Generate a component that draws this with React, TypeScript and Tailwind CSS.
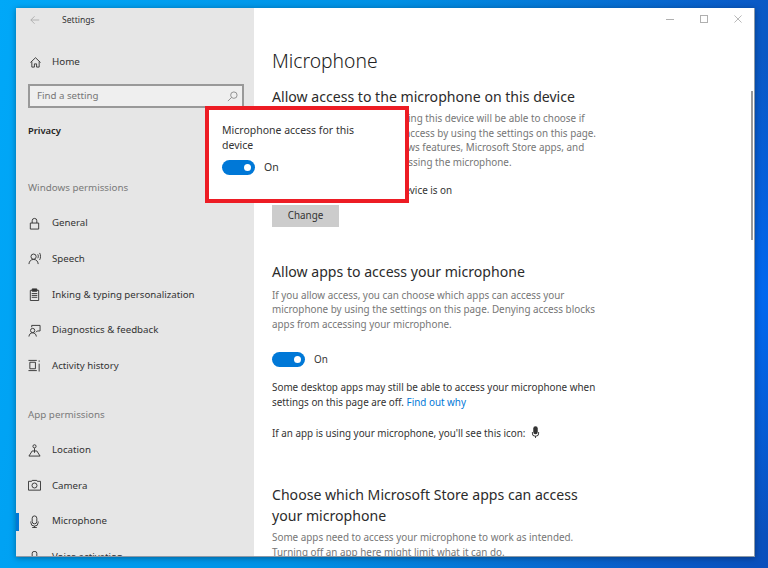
import type { ReactNode } from 'react';

function Icon({ children }: { children: ReactNode }) {
  return (
    <svg viewBox="0 0 14 14" fill="none" stroke="#333" strokeWidth="1" className="w-[13px] h-[13px] shrink-0">
      {children}
    </svg>
  );
}

const icons: Record<string, ReactNode> = {
  General: (
    <>
      <path d="M2.5 6.500h9v6.500h-9z" />
      <path d="M4.500 6.500V4a2.500 2.500 0 0 1 5 0v2.500" />
    </>
  ),
  Speech: (
    <>
      <circle cx="6" cy="5" r="2.800" />
      <path d="M1 13c.3-3 2-5 5-5s4.700 2 5 5" />
      <path d="M10.500 2.500c.8 1.200.8 3 0 4.200M12.500 1c1.300 2 1.300 5.500 0 7.500" />
    </>
  ),
  'Inking & typing personalization': (
    <>
      <path d="M4.500 2.500H2.500v11h9v-11H9.500" />
      <path d="M4.500 1h5v2.500h-5z" fill="#333" />
      <path d="M4 6h6M4 8h6M4 10h6" />
    </>
  ),
  'Diagnostics & feedback': (
    <>
      <circle cx="5" cy="7" r="2.300" />
      <path d="M1 13.500c.3-2.500 1.800-4 4-4s3.700 1.500 4 4" />
      <path d="M4 3.500V1.500h9v6h-3l-1.500 1.500" />
    </>
  ),
  'Activity history': (
    <>
      <path d="M2 3.500h6v7H2z" />
      <path d="M.5 1.500h9M.5 12.500h9M12 1.500v1.500M12 5v8.500" />
    </>
  ),
  Location: (
    <>
      <circle cx="7" cy="2.500" r="1.700" />
      <path d="M7 4.500v5" />
      <path d="M4.500 7.500h5l3.500 5.500H1z" />
    </>
  ),
  Camera: (
    <>
      <path d="M.5 2.500h3.500l.5-1h5l.5 1h3.500v9.500H.5z" />
      <circle cx="7" cy="7" r="2.700" />
    </>
  ),
  Microphone: (
    <>
      <rect x="4.500" y="1" width="5" height="8.500" rx="2.500" />
      <path d="M3 7v1a4 4 0 0 0 8 0V7M7 12v1.500M4.500 13.500h5" />
    </>
  ),
  'Voice activation': (
    <>
      <rect x="4.500" y=".5" width="5" height="7" rx="2" />
      <path d="M2.500 8h9v4h-9z" fill="#333" />
    </>
  ),
};

function NavItem({ label, active }: { label: string; active?: boolean }) {
  return (
    <div className="relative h-[35.7px] flex items-center gap-[11px] pl-[12px] text-[9.7px] leading-[14px] text-[#333] shrink-0">
      {active && <div className="absolute left-0 top-[9px] w-[3px] h-[18px] bg-[#0078d7]" />}
      <Icon>{icons[label]}</Icon>
      <span>{label}</span>
    </div>
  );
}

function Toggle() {
  return (
    <div className="w-[33px] h-[15px] rounded-full bg-[#0078d7] flex items-center justify-end pr-[4px] shrink-0">
      <div className="w-[7px] h-[7px] rounded-full bg-white" />
    </div>
  );
}

function Sidebar() {
  return (
    <div className="w-[238px] h-full bg-[#e6e6e6] overflow-hidden flex flex-col shrink-0 leading-[14px] font-['Noto_Sans',sans-serif]">
      <div className="h-[24px] shrink-0 flex items-center pl-[14px]">
        <svg viewBox="0 0 12 12" fill="none" stroke="#a8a8a8" strokeWidth="1" className="w-[10px] h-[10px]">
          <path d="M11 6H1M5.500 1.500 1 6l4.500 4.500" />
        </svg>
        <span className="ml-[22px] text-[8.6px] text-[#333]">Settings</span>
      </div>
      <div className="h-[26px] shrink-0 mt-[17px] flex items-center gap-[11px] pl-[14px] text-[9.8px] text-[#333]">
        <svg viewBox="0 0 12 12" fill="none" stroke="#333" strokeWidth="1" className="w-[11px] h-[11px]">
          <path d="M.5 6 6 .8 11.500 6M2 5v6h2.800V7.500h2.400V11H10V5" />
        </svg>
        <span>Home</span>
      </div>
      <div className="ml-[12px] mt-[9px] w-[216px] h-[24px] shrink-0 border-2 border-[#999] bg-[#efefef] flex items-center justify-between pl-[7px] pr-[4px] text-[9.7px] text-[#767676]">
        <span>Find a setting</span>
        <svg viewBox="0 0 12 12" fill="none" stroke="#8a8a8a" strokeWidth="1" className="w-[11px] h-[11px]">
          <circle cx="7.500" cy="4.500" r="3.500" />
          <path d="M5 7 1 11" />
        </svg>
      </div>
      <div className="ml-[12px] mt-[16px] shrink-0 text-[9.4px] font-semibold text-[#222]">Privacy</div>
      <div className="ml-[12px] mt-[43px] shrink-0 text-[9.8px] text-[#7a7a7a]">Windows permissions</div>
      <div className="mt-[10.3px] shrink-0 flex flex-col">
        <NavItem label="General" />
        <NavItem label="Speech" />
        <NavItem label="Inking & typing personalization" />
        <NavItem label="Diagnostics & feedback" />
        <NavItem label="Activity history" />
      </div>
      <div className="ml-[12px] mt-[24.5px] shrink-0 text-[9.8px] text-[#7a7a7a]">App permissions</div>
      <div className="mt-[10px] shrink-0 flex flex-col">
        <NavItem label="Location" />
        <NavItem label="Camera" />
        <NavItem label="Microphone" active />
        <NavItem label="Voice activation" />
      </div>
    </div>
  );
}

function Content() {
  return (
    <div className="flex-1 h-full overflow-hidden pl-[18px] pt-[39px] text-[9.87px] leading-[14.5px] text-[#333] font-['Noto_Sans',sans-serif]">
      <h1 className="text-[19.3px] leading-[28px] font-light text-[#222]">Microphone</h1>
      <h2 className="mt-[12px] text-[14.1px] leading-[20px] text-[#2b2b2b]">Allow access to the microphone on this device</h2>
      <p className="mt-[4px] text-[#767676] whitespace-nowrap">
        If you allow access, people using this device will be able to choose if
        <br />
        their apps have microphone access by using the settings on this page.
        <br />
        Denying access blocks Windows features, Microsoft Store apps, and
        <br />
        most desktop apps from accessing the microphone.
      </p>
      <p className="mt-[14px]">Microphone access for this device is on</p>
      <button className="mt-[7px] block w-[67px] h-[22px] bg-[#cccccc] text-[#333]">Change</button>
      <h2 className="mt-[35px] text-[14.1px] leading-[20px] text-[#2b2b2b]">Allow apps to access your microphone</h2>
      <p className="mt-[6px] text-[#767676] whitespace-nowrap">
        If you allow access, you can choose which apps can access your
        <br />
        microphone by using the settings on this page. Denying access blocks
        <br />
        apps from accessing your microphone.
      </p>
      <div className="mt-[21px] flex items-center gap-[9px]">
        <Toggle />
        <span>On</span>
      </div>
      <p className="mt-[13px] whitespace-nowrap">
        Some desktop apps may still be able to access your microphone when
        <br />
        settings on this page are off. <span className="text-[#0078d7]">Find out why</span>
      </p>
      <div className="mt-[17px] flex items-center gap-[6px] whitespace-nowrap">
        <span>If an app is using your microphone, you'll see this icon:</span>
        <svg viewBox="0 0 10 14" className="w-[9px] h-[13px] mb-[2px]" fill="#333">
          <rect x="2.500" y="0" width="5" height="9" rx="2.500" />
          <path d="M1 6.500h1v1a3 3 0 0 0 6 0v-1h1v1a4 4 0 0 1-3.500 4V13H4.500v-1.500A4 4 0 0 1 1 7.500z" />
        </svg>
      </div>
      <h2 className="mt-[44px] text-[14.1px] leading-[20.5px] text-[#2b2b2b] whitespace-nowrap">
        Choose which Microsoft Store apps can access
        <br />
        your microphone
      </h2>
      <p className="mt-[4px] text-[#767676] whitespace-nowrap">
        Some apps need to access your microphone to work as intended.
        <br />
        Turning off an app here might limit what it can do.
      </p>
    </div>
  );
}

export default function App() {
  return (
    <div className="w-[768px] h-[568px] overflow-hidden pt-[8px] pl-[16px] bg-[radial-gradient(ellipse_110px_240px_at_100%_52%,#0068f0_0%,transparent_100%),linear-gradient(100deg,#00a8f8_0%,#0090e4_45%,#0a5cc8_85%,#0a4fbc_100%)]">
      <div className="relative w-[739px] h-[549px] bg-white flex border border-[#8d9aa8] border-l-0 border-t-0 shadow-[0_1px_6px_rgba(0,0,0,0.35)]">
        <Sidebar />
        <Content />
        {/* window buttons */}
        <div className="absolute top-[7px] right-[12px] flex items-center gap-[26px]">
          <div className="w-[8px] h-px bg-[#b0b0b0]" />
          <div className="w-[8px] h-[8px] border border-[#b0b0b0]" />
          <svg viewBox="0 0 9 9" stroke="#b0b0b0" strokeWidth="1" className="w-[8px] h-[8px]">
            <path d="m.5.500 8 8M8.500.500l-8 8" />
          </svg>
        </div>
        {/* scrollbar */}
        <div className="absolute top-[83px] right-[1px] w-[2px] h-[149px] bg-[#9a9a9a]" />
        {/* red callout */}
        <div className="absolute left-[189px] top-[98px] w-[204px] h-[97px] border-[4px] border-[#ed1c24] bg-white pl-[13px] pt-[13px] text-[10.5px] leading-[15px] text-[#333] font-['Noto_Sans',sans-serif]">
          <p>
            Microphone access for this
            <br />
            device
          </p>
          <div className="mt-[7px] flex items-center gap-[9px]">
            <Toggle />
            <span>On</span>
          </div>
        </div>
      </div>
    </div>
  );
}
